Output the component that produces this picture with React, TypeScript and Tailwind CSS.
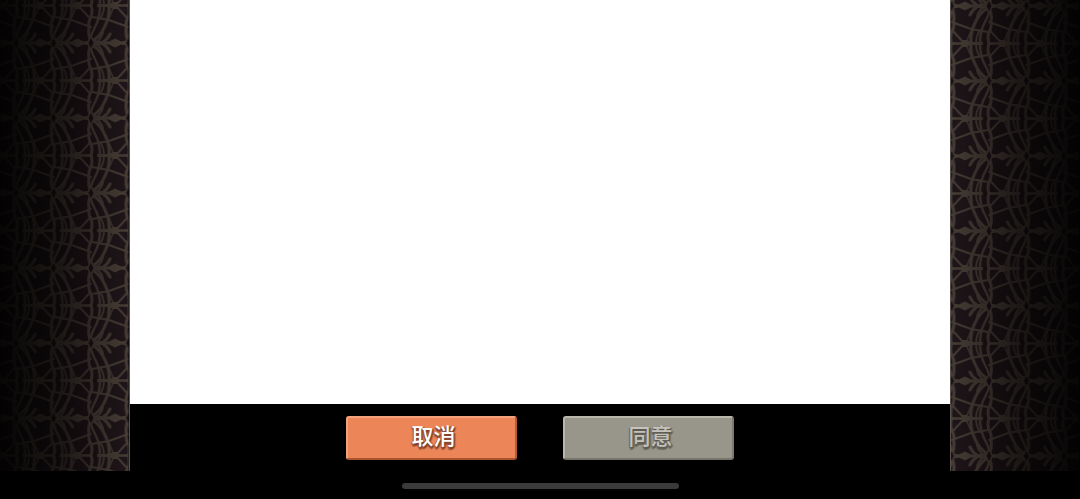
import React from 'react';

interface SidePatternProps {
  id: string;
  transform: string;
}

// One half of the lace motif, it is mirrored around the flower row
const MotifHalf = () => (
  <g fill="none" stroke="#4b4039" strokeLinecap="round">
    <path d="M-1 3Q1 11 4 16Q9 25 9 38" strokeWidth="2.4" />
    <path d="M-1 4Q-3 9 -2 15Q-3 21 0 26Q2 32 0 38" strokeWidth="3" />
    <path d="M3 3Q10 8 14 17Q19 27 18 38" strokeWidth="3" />
    <path d="M9 24Q13 30 13 38" strokeWidth="1.8" />
    <path d="M12 1Q17 4 19 9" strokeWidth="3" />
    <path d="M7 2Q11 6 12 11" strokeWidth="2" />
    <path d="M1 26L18 23L37.3 16" strokeWidth="1.9" />
    <path d="M25 37L37 24" strokeWidth="1.9" />
    <path d="M23 37L18 25" strokeWidth="1.4" />
  </g>
);

const Motif = () => (
  <g>
    <MotifHalf />
    <g transform="scale(1 -1)">
      <MotifHalf />
    </g>
    <g fill="#4b4039">
      <path d="M0 -7L4 -3L12 -1.5L18 -1.5L24 -4.5L30 -1.5L34 -2L38 -6V6L34 2L30 1.5L24 4.5L18 1.5L12 1.5L4 3L0 7L-4 0Z" />
      <path d="M0 36H19L22 34H26L28 36.5H38V38.5H28L26 41H22L19 39H0Z" />
      <path d="M0 -36H19L22 -34H26L28 -36.5H38V-38.5H28L26 -41H22L19 -39H0Z" />
    </g>
    <path d="M0 -5L2.5 0L0 5L-2.5 0Z" fill="#1f1318" />
    <path d="M4 32L6.5 37.5L4 43L1.5 37.5Z M4 -32L6.5 -37.5L4 -43L1.5 -37.5Z" fill="#1f1318" />
  </g>
);

const SidePattern: React.FC<SidePatternProps> = ({ id, transform }) => {
  return (
    <svg className="absolute inset-0 h-full w-full" aria-hidden="true">
      <defs>
        <pattern id={id} width="37.4" height="75" patternUnits="userSpaceOnUse" patternTransform={transform}>
          <rect width="38" height="75" fill="#21161b" />
          {[-37.4, 0, 37.4].map(x => (
            <g key={x}>
              <g transform={`translate(${x} 0)`}><Motif /></g>
              <g transform={`translate(${x} 75)`}><Motif /></g>
            </g>
          ))}
        </pattern>
      </defs>
      <rect width="100%" height="100%" fill={`url(#${id})`} />
    </svg>
  );
};

const buttonClass = "h-11 w-[171px] rounded-[3px] border-2 pb-2 pl-1 text-[22px] leading-6 font-medium";

const App: React.FC = () => {
  return (
    <div className="flex h-screen flex-col bg-black font-['Noto_Sans_CJK_SC',sans-serif]">
      <div className="flex min-h-0 flex-1">
        <div className="relative w-[12%] border-r border-[#55504c]">
          <SidePattern id="lace-left" transform="translate(91 43)" />
          <div className="absolute inset-0 bg-linear-to-r from-black/90 via-black/60 to-black/5" />
        </div>
        <main className="flex flex-1 flex-col">
          <div className="flex-1 bg-white" />
          <div className="flex justify-center gap-[46px] pt-3 pb-[11px]">
            <button
              type="button"
              className={`${buttonClass} border-t-[#f3a27b] border-r-[#b85b37] border-b-[#a9542f] border-l-[#f3a27b] bg-[#ec8659] text-white [text-shadow:1px_2px_1px_#85452c,-1px_1px_1px_#9a5337,2px_1px_1px_#9a5337,0_3px_1px_#9a5337]`}
            >
              取消
            </button>
            <button
              type="button"
              disabled
              className={`${buttonClass} border-t-[#b9b7a9] border-r-[#7c7a6e] border-b-[#77756a] border-l-[#b9b7a9] bg-[#98968a] text-[#c4c2ba] [text-shadow:1px_2px_1px_#5d5a52,-1px_1px_1px_#6b685f,2px_1px_1px_#6b685f,0_3px_1px_#6b685f]`}
            >
              同意
            </button>
          </div>
        </main>
        <div className="relative w-[12%] border-l border-[#55504c]">
          <SidePattern id="lace-right" transform="translate(38 81) scale(-1 1)" />
          <div className="absolute inset-0 bg-linear-to-l from-black/90 via-black/60 to-black/5" />
        </div>
      </div>
      <div className="flex h-7 justify-center pt-3">
        <div className="h-[6px] w-[277px] rounded-full bg-[#3a3a3a]" />
      </div>
    </div>
  );
};

export default App;
